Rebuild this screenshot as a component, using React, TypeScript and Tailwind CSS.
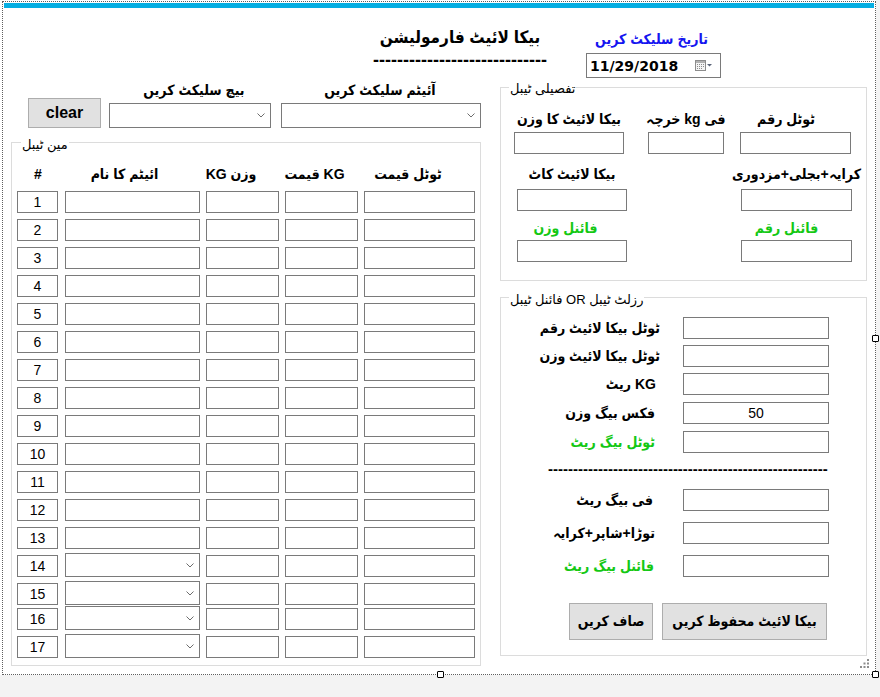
import React from "react";

function Chevron() {
  return (
    <svg width="8" height="5" viewBox="0 0 8 5" className="block">
      <polyline points="0.5,0.5 4,4 7.5,0.5" fill="none" stroke="#6d6d6d" strokeWidth="1" />
    </svg>
  );
}

function CalIcon() {
  return (
    <svg width="18" height="11" viewBox="0 0 18 11" className="ml-auto mr-[7px] block">
      <rect x="0.5" y="0.5" width="10" height="10" fill="#f4f4f4" stroke="#8c8c8c" />
      <rect x="1" y="1" width="9" height="2" fill="#b0b0b0" />
      <rect x="2" y="4" width="1" height="1" fill="#8c8c8c" />
      <rect x="4" y="4" width="1" height="1" fill="#8c8c8c" />
      <rect x="6" y="4" width="1" height="1" fill="#8c8c8c" />
      <rect x="8" y="4" width="1" height="1" fill="#8c8c8c" />
      <rect x="2" y="6" width="1" height="1" fill="#8c8c8c" />
      <rect x="4" y="6" width="1" height="1" fill="#8c8c8c" />
      <rect x="6" y="6" width="1" height="1" fill="#8c8c8c" />
      <rect x="8" y="6" width="1" height="1" fill="#8c8c8c" />
      <rect x="2" y="8" width="1" height="1" fill="#8c8c8c" />
      <rect x="4" y="8" width="1" height="1" fill="#8c8c8c" />
      <rect x="6" y="8" width="1" height="1" fill="#8c8c8c" />
      <polygon points="12,4 17,4 14.5,6.5" fill="#5a6478" />
    </svg>
  );
}

function Box({ cls, children }: { cls: string; children?: React.ReactNode }) {
  return (
    <div
      className={`${cls} flex h-[22px] shrink-0 items-center justify-center border border-[#7a7a7a] bg-white font-['Liberation_Sans',sans-serif] text-[14px] text-black`}
    >
      {children}
    </div>
  );
}

function Combo({ cls }: { cls: string }) {
  return (
    <div className={`${cls} flex shrink-0 items-center justify-end border border-[#7a7a7a] bg-white pr-[5px]`}>
      <Chevron />
    </div>
  );
}

function Label({ cls, children }: { cls?: string; children: React.ReactNode }) {
  return (
    <div dir="rtl" className={`${cls ?? ""} whitespace-nowrap text-[14px] font-bold leading-[20px]`}>
      {children}
    </div>
  );
}

function Legend({ cls, children }: { cls: string; children: React.ReactNode }) {
  return (
    <div
      dir="rtl"
      className={`${cls} w-fit whitespace-nowrap bg-white px-[1px] font-['Liberation_Sans','DejaVu_Sans',sans-serif] text-[13px] font-normal leading-[16px]`}
    >
      {children}
    </div>
  );
}

function Handle({ cls }: { cls: string }) {
  return <div className={`${cls} absolute h-[7px] w-[7px] rounded-[1px] border border-black bg-white`} />;
}

function ResultRow({
  mt,
  lw,
  bml,
  text,
  green,
  value,
}: {
  mt: string;
  lw: string;
  bml: string;
  text: string;
  green?: boolean;
  value?: string;
}) {
  return (
    <div className={`${mt} flex h-[22px] items-center`}>
      <Label cls={`${lw} shrink-0 text-right ${green ? "text-[#14c814]" : "text-black"}`}>{text}</Label>
      <Box cls={`${bml} w-[146px]`}>{value}</Box>
    </div>
  );
}

export default function App() {
  const rows = Array.from({ length: 17 }, (_, i) => i + 1);
  return (
    <div className="relative h-[697px] w-[880px] overflow-hidden bg-[#f3f3f3] font-['Liberation_Sans','DejaVu_Sans_Condensed','DejaVu_Sans',sans-serif] text-black">
      <div className="h-[675px] w-[876px] bg-white pl-[2px] pt-[1px]">
        <div className="h-[674px] w-[874px] border border-dotted border-[#5f5f5f]">
          <div className="mx-[1px] mt-[1px] h-[5px] bg-[#05aee2]" />

          {/* header */}
          <div className="flex h-[70px]">
            <div className="ml-[369px] flex w-[176px] flex-col items-center pt-[18px]">
              <div dir="rtl" className="whitespace-nowrap text-[17px] font-bold leading-[24px]">
                بیکا لائیٹ فارمولیشن
              </div>
              <div className="whitespace-nowrap text-[18px] font-bold leading-[20px]">-----------------------------</div>
            </div>
            <div className="ml-[38px] flex w-[135px] flex-col items-center pt-[21px]">
              <div dir="rtl" className="whitespace-nowrap pr-[4px] text-[14px] font-bold leading-[20px] text-[#1515f0]">
                تاریخ سلیکٹ کریں
              </div>
              <div className="mt-[4px] flex h-[25px] w-[135px] items-center border border-[#7a7a7a] bg-white pl-[3px]">
                <span className="font-['DejaVu_Sans',sans-serif] text-[14px] font-bold leading-none">11/29/2018</span>
                <CalIcon />
              </div>
            </div>
          </div>

          {/* body */}
          <div className="flex">
            {/* left column */}
            <div className="ml-[8px] w-[470px] shrink-0">
              <div className="flex h-[20px]">
                <Label cls="ml-[98px] w-[173px] text-center leading-[24px]">بیچ سلیکٹ کریں</Label>
                <Label cls="w-[206px] text-center leading-[24px]">آئیٹم سلیکٹ کریں</Label>
              </div>
              <div className="flex h-[30px] items-end">
                <div className="ml-[17px] flex h-[30px] w-[73px] shrink-0 items-center justify-center border border-[#adadad] bg-[#e1e1e1] text-[16px] font-bold">
                  clear
                </div>
                <Combo cls="ml-[8px] h-[25px] w-[162px]" />
                <Combo cls="ml-[10px] h-[25px] w-[200px]" />
              </div>

              {/* main table group */}
              <div className="mt-[14px] h-[524px] w-[470px] border border-[#dcdcdc]">
                <Legend cls="-mt-[6px] ml-[9px]">مین ٹیبل</Legend>
                <div className="mt-[11px] flex">
                  <Label cls="ml-[5px] w-[42px] text-center">#</Label>
                  <Label cls="w-[131px] text-center">ائیٹم کا نام</Label>
                  <Label cls="w-[82px] text-center">وزن  KG</Label>
                  <Label cls="w-[85px] text-center">KG قیمت</Label>
                  <Label cls="w-[102px] text-center">ٹوٹل قیمت</Label>
                </div>
                <div className="mt-[7px]">
                  {rows.map((n) => (
                    <div
                      key={n}
                      className={`flex h-[22px] items-end ${n === 1 ? "" : n === 16 ? "mt-[3px]" : "mt-[6px]"}`}
                    >
                      <Box cls="ml-[5px] w-[41px]">{n}</Box>
                      {n >= 14 ? <Combo cls="ml-[7px] h-[24px] w-[135px]" /> : <Box cls="ml-[7px] w-[135px]" />}
                      <Box cls="ml-[6px] w-[73px]" />
                      <Box cls="ml-[6px] w-[73px]" />
                      <Box cls="ml-[6px] w-[111px]" />
                    </div>
                  ))}
                </div>
              </div>
            </div>

            {/* right column */}
            <div className="ml-[19px] w-[367px] shrink-0">
              {/* details group */}
              <div className="mt-[9px] h-[194px] w-[367px] border border-[#dcdcdc]">
                <Legend cls="-mt-[7px] ml-[8px]">تفصیلی ٹیبل</Legend>
                <div className="mt-[12px] flex">
                  <div className="ml-[13px] flex w-[110px] flex-col items-center">
                    <Label>بیکا لائیٹ کا وزن</Label>
                    <Box cls="mt-[3px] w-[110px]" />
                  </div>
                  <div className="ml-[24px] flex w-[76px] flex-col items-center">
                    <Label>فی kg خرچہ</Label>
                    <Box cls="mt-[3px] w-[76px]" />
                  </div>
                  <div className="ml-[16px] flex w-[111px] flex-col items-center">
                    <Label cls="pr-[19px]">ٹوٹل رقم</Label>
                    <Box cls="mt-[3px] w-[111px]" />
                  </div>
                </div>
                <div className="mt-[10px] flex">
                  <div className="ml-[16px] flex w-[110px] flex-col items-center">
                    <Label>بیکا لائیٹ کاٹ</Label>
                    <Box cls="mt-[5px] w-[110px]" />
                  </div>
                  <div className="ml-[114px] flex w-[111px] flex-col items-center">
                    <Label>کرایہ+بجلی+مزدوری</Label>
                    <Box cls="mt-[5px] w-[111px]" />
                  </div>
                </div>
                <div className="mt-[7px] flex">
                  <div className="ml-[16px] flex w-[110px] flex-col items-center">
                    <Label cls="pr-[13px] text-[#14c814]">فائنل وزن</Label>
                    <Box cls="mt-[2px] w-[110px]" />
                  </div>
                  <div className="ml-[114px] flex w-[111px] flex-col items-center">
                    <Label cls="pr-[20px] text-[#14c814]">فائنل رقم</Label>
                    <Box cls="mt-[2px] w-[111px]" />
                  </div>
                </div>
              </div>

              {/* result group */}
              <div className="mt-[16px] h-[359px] w-[367px] border border-[#dcdcdc]">
                <Legend cls="-mt-[6px] ml-[8px]">رزلٹ ٹیبل OR فائنل ٹیبل</Legend>
                <ResultRow mt="mt-[9px]" lw="w-[159px]" bml="ml-[23px]" text="ٹوٹل بیکا لائیٹ رقم" />
                <ResultRow mt="mt-[6px]" lw="w-[159px]" bml="ml-[23px]" text="ٹوٹل بیکا لائیٹ وزن" />
                <ResultRow mt="mt-[6px]" lw="w-[155px]" bml="ml-[27px]" text="KG ریٹ" />
                <ResultRow mt="mt-[7px]" lw="w-[154px]" bml="ml-[28px]" text="فکس بیگ وزن" value="50" />
                <ResultRow mt="mt-[7px]" lw="w-[154px]" bml="ml-[28px]" text="ٹوٹل بیگ ریٹ" green />
                <div className="ml-[47px] mt-[6px] whitespace-nowrap text-[15px] font-bold leading-[20px]">
                  --------------------------------------------------------
                </div>
                <ResultRow mt="mt-[10px]" lw="w-[152px]" bml="ml-[30px]" text="فی بیگ ریٹ" />
                <ResultRow mt="mt-[11px]" lw="w-[154px]" bml="ml-[28px]" text="توڑا+شاپر+کرایہ" />
                <ResultRow mt="mt-[11px]" lw="w-[153px]" bml="ml-[29px]" text="فائنل بیگ ریٹ" green />
                <div className="mt-[26px] flex">
                  <div
                    dir="rtl"
                    className="ml-[68px] flex h-[37px] w-[84px] items-center justify-center whitespace-nowrap border border-[#adadad] bg-[#e1e1e1] text-[14px] font-bold"
                  >
                    صاف کریں
                  </div>
                  <div
                    dir="rtl"
                    className="ml-[9px] flex h-[37px] w-[165px] items-center justify-center whitespace-nowrap border border-[#adadad] bg-[#e1e1e1] text-[14px] font-bold"
                  >
                    بیکا لائیٹ محفوظ کریں
                  </div>
                </div>
              </div>
            </div>
          </div>
        </div>
      </div>

      {/* designer adornments */}
      <Handle cls="left-[872px] top-[335px]" />
      <Handle cls="left-[437px] top-[671px]" />
      <Handle cls="left-[872px] top-[671px]" />
      <svg width="12" height="12" viewBox="0 0 12 12" className="absolute left-[859px] top-[658px]">
        <rect x="8" y="1" width="2" height="2" fill="#8c8c8c" />
        <rect x="4.5" y="4.5" width="2" height="2" fill="#8c8c8c" />
        <rect x="8" y="4.5" width="2" height="2" fill="#8c8c8c" />
        <rect x="1" y="8" width="2" height="2" fill="#8c8c8c" />
        <rect x="4.5" y="8" width="2" height="2" fill="#8c8c8c" />
        <rect x="8" y="8" width="2" height="2" fill="#8c8c8c" />
      </svg>
    </div>
  );
}
